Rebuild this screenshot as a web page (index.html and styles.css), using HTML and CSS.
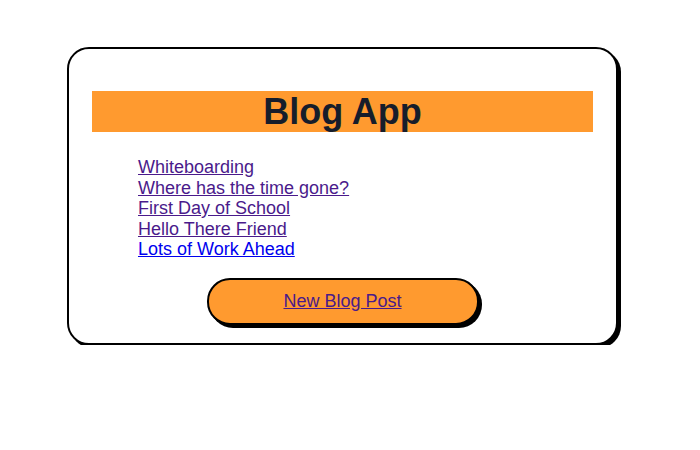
FILE: index.html
```html
<!DOCTYPE html>
<html>
<head>
<meta charset="utf-8">
<link rel="stylesheet" href="styles.css">
</head>
<body>
<div class="card">
  <h1 class="title">Blog App</h1>
  <ul class="posts">
    <li><a class="visited" href="#">Whiteboarding</a></li>
    <li><a class="visited" href="#">Where has the time gone?</a></li>
    <li><a class="visited" href="#">First Day of School</a></li>
    <li><a class="visited" href="#">Hello There Friend</a></li>
    <li><a class="fresh" href="#">Lots of Work Ahead</a></li>
  </ul>
  <div class="actions">
    <div class="button"><a class="visited" href="#">New Blog Post</a></div>
  </div>
</div>
</body>
</html>
```
FILE: styles.css
```css
html, body {
  margin: 0;
  padding: 0;
  background: #ffffff;
}
body {
  font-family: "Liberation Sans", Arial, sans-serif;
  padding: 47px 0 0 67px;
}
.card {
  box-sizing: border-box;
  width: 551px;
  height: 298px;
  border: 2px solid #000;
  border-radius: 22px;
  box-shadow: 3px 3px 0 #000;
  padding: 42px 23px 0 23px;
  background: #fff;
}
.title {
  margin: 0;
  background: #ff9a2f;
  height: 41px;
  line-height: 42px;
  font-size: 36px;
  font-weight: bold;
  text-align: center;
  color: #161d2b;
}
.posts {
  list-style: none;
  margin: 25px 0 0 0;
  padding: 0 0 0 46px;
  font-size: 18px;
  line-height: 20.5px;
}
a.visited { color: #4a1a8b; }
a.fresh { color: #0000ee; }
.actions {
  display: flex;
  justify-content: center;
  margin-top: 18px;
}
.button {
  box-sizing: border-box;
  width: 272px;
  height: 47px;
  border: 2px solid #000;
  border-radius: 23px;
  box-shadow: 3px 3px 0 #000;
  background: #ff9a2f;
  display: flex;
  align-items: center;
  justify-content: center;
  font-size: 18px;
}
```
